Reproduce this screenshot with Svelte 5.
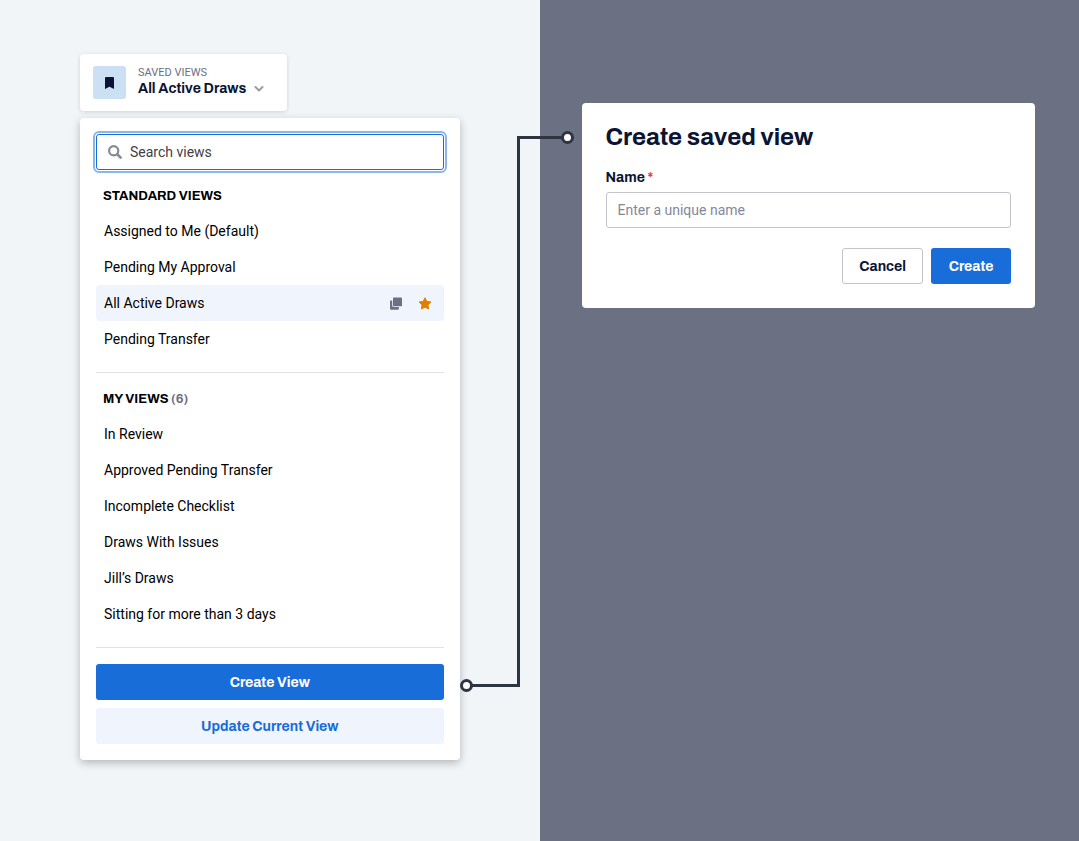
<script>
let search = $state("")
let selected = $state("All Active Draws")
let favorite = $state(true)
let name = $state("")

const standardViews = [
    "Assigned to Me (Default)",
    "Pending My Approval",
    "All Active Draws",
    "Pending Transfer"
]
let myViews = $state([
    "In Review",
    "Approved Pending Transfer",
    "Incomplete Checklist",
    "Draws With Issues",
    "Jill’s Draws",
    "Sitting for more than 3 days"
])

const matches = (view)=> view.toLowerCase().includes(search.toLowerCase())

const createView = (e)=>{
    e.preventDefault()
    if (name.trim() != ""){
        myViews.push(name.trim())
        name = ""
    }
}
</script>

{#snippet row(view)}
    <li class="row" class:selected={view == selected}>
        <button class="view" onclick={()=> selected = view}>{view}</button>
        {#if view == selected}
        <button class="icon" aria-label="Duplicate view">
            <svg width="12" height="13" viewBox="0 0 12 13">
                <path fill="#6b7082" d="M0 4.2a.8.8 0 0 1 .8-.8h1.4v5.2c0 .9.6 1.4 1.4 1.4h5.2v1.9a.8.8 0 0 1-.8.8H.8a.8.8 0 0 1-.8-.8z"/>
                <rect fill="#6b7082" x="3" y="0.4" width="9" height="8.8" rx="0.8"/>
            </svg>
        </button>
        <button class="icon" aria-label="Favorite" aria-pressed={favorite} onclick={()=> favorite = !favorite}>
            <svg width="14" height="13" viewBox="0 0 14 13">
                <path fill={favorite ? "#e37d00" : "#b4b7c3"} stroke={favorite ? "#e37d00" : "#b4b7c3"} stroke-width="1" stroke-linejoin="round" d="M7 .8 8.8 4.4 12.9 5 9.9 7.9 10.6 12 7 10.1 3.4 12 4.1 7.9 1.1 5 5.2 4.4z"/>
            </svg>
        </button>
        {/if}
    </li>
{/snippet}

<main>
    <section class="left">
        <button class="trigger">
            <span class="badge">
                <svg width="9" height="12" viewBox="0 0 9 12">
                    <path fill="#0b1533" d="M0 1a1 1 0 0 1 1-1h7a1 1 0 0 1 1 1v11L4.500 9.700 0 12z"/>
                </svg>
            </span>
            <span class="current">
                <span class="caption">SAVED VIEWS</span>
                <span class="name">{selected}</span>
            </span>
            <svg class="chevron" width="10" height="8" viewBox="0 0 10 8">
                <path fill="none" stroke="#9a9cab" stroke-width="2" stroke-linecap="round" stroke-linejoin="round" d="M1.500 2 5 5.500 8.500 2"/>
            </svg>
        </button>

        <div class="dropdown">
            <label class="search">
                <svg width="14" height="14" viewBox="0 0 14 14">
                    <circle cx="5.700" cy="5.700" r="4.600" fill="none" stroke="#85889a" stroke-width="2.200"/>
                    <path stroke="#85889a" stroke-width="2.600" stroke-linecap="round" d="M9.500 9.500 12.600 12.600"/>
                </svg>
                <input type="text" placeholder="Search views" aria-label="Search views" bind:value={search}>
            </label>

            <h2>STANDARD VIEWS</h2>
            <ul>
                {#each standardViews.filter(matches) as view}
                {@render row(view)}
                {/each}
            </ul>
            <hr>
            <h2>MY VIEWS <span>({myViews.length})</span></h2>
            <ul>
                {#each myViews.filter(matches) as view}
                {@render row(view)}
                {/each}
            </ul>
            <hr>
            <div class="actions">
                <button class="btn primary">Create View</button>
                <button class="btn light">Update Current View</button>
            </div>

            <!-- runs from the Create View button over to the dialog -->
            <svg class="connector" width="114" height="562" viewBox="0 0 114 562">
                <g fill="none" stroke="#2e3442" stroke-width="3">
                    <path d="M12 554.500H58.500V6.500H102"/>
                    <circle cx="6.500" cy="554.500" r="5" fill="#fff"/>
                    <circle cx="107.500" cy="6.500" r="5" fill="#fff"/>
                </g>
            </svg>
        </div>
    </section>

    <section class="right">
        <form class="dialog" onsubmit={createView}>
            <h1>Create saved view</h1>
            <label for="view-name">Name <span>*</span></label>
            <input id="view-name" type="text" placeholder="Enter a unique name" bind:value={name}>
            <div class="buttons">
                <button type="button" class="btn outline" onclick={()=> name = ""}>Cancel</button>
                <button type="submit" class="btn primary">Create</button>
            </div>
        </form>
    </section>
</main>

<style>
    :global(body){
        margin: 0;
    }
    main{
        display: grid;
        grid-template-columns: 1fr 1fr;
        min-height: 100vh;
        font-family: Roboto, sans-serif;
        font-size: 14px;
        line-height: 20px;
        color: #000;
    }
    button, input{
        font: inherit;
        color: inherit;
        box-sizing: border-box;
    }
    button{
        border: 0;
        padding: 0;
        background: none;
        cursor: pointer;
    }
    svg{
        display: block;
        flex: none;
    }
    .left{
        display: flex;
        flex-direction: column;
        align-items: flex-start;
        gap: 7px;
        padding: 54px 80px;
        background-color: #f1f5f8;
    }
    .right{
        padding: 103px 44px 103px 42px;
        background-color: #6b7082;
    }

    .trigger{
        display: flex;
        align-items: center;
        padding: 11px 23px 11px 13px;
        background-color: white;
        border-radius: 4px;
        box-shadow: 0 1px 4px rgba(0, 0, 0, 0.14);
        text-align: left;
    }
    .badge{
        display: flex;
        align-items: center;
        justify-content: center;
        width: 33px;
        height: 33px;
        margin-right: 12px;
        background-color: #cbe0f2;
        border-radius: 3px;
    }
    .current{
        display: flex;
        flex-direction: column;
        padding-bottom: 3px;
        line-height: 16px;
    }
    .caption{
        font-size: 11px;
        color: #6b7082;
    }
    .name{
        font-family: Archivo, "Liberation Sans", sans-serif;
        font-weight: bold;
        color: #0b1533;
    }
    .chevron{
        align-self: flex-end;
        margin: 0 0 7px 8px;
    }

    .dropdown{
        position: relative;
        align-self: stretch;
        padding: 16px;
        background-color: white;
        border-radius: 4px;
        box-shadow: 0 3px 8px rgba(0, 0, 0, 0.25);
    }
    .search{
        display: flex;
        align-items: center;
        gap: 8px;
        height: 36px;
        margin-bottom: 7px;
        padding: 0 11px;
        box-sizing: border-box;
        border: 1px solid #186dd9;
        border-radius: 3px;
        outline: 2px solid #8bb6ec;
        outline-offset: 1px;
    }
    .search input{
        flex: 1;
        min-width: 0;
        border: 0;
        padding: 0;
        outline: none;
        background: none;
    }
    .search input::placeholder{
        color: #3f4146;
    }
    h2{
        margin: 0;
        padding: 2px 7px 0;
        font-family: Archivo, "Liberation Sans", sans-serif;
        font-size: 13px;
        font-weight: bold;
        line-height: 34px;
    }
    h2 span{
        color: #6b7082;
    }
    ul{
        margin: 0;
        padding: 0;
        list-style: none;
    }
    .row{
        display: flex;
        align-items: center;
        gap: 16px;
        height: 36px;
        padding-right: 12px;
        border-radius: 4px;
    }
    .selected{
        background-color: #f0f5fd;
    }
    .view{
        flex: 1;
        height: 36px;
        padding: 0 8px;
        text-align: left;
    }
    hr{
        height: 1px;
        margin: 15px 0 7px;
        border: 0;
        background-color: #e1e2e5;
    }
    .actions{
        display: flex;
        flex-direction: column;
        gap: 8px;
        padding-top: 9px;
    }
    .btn{
        min-width: 80px;
        height: 36px;
        padding: 2px 16px 0;
        border-radius: 3px;
        font-family: Archivo, "Liberation Sans", sans-serif;
        font-weight: bold;
    }
    .primary{
        background-color: #186dd9;
        color: white;
    }
    .light{
        background-color: #f0f5fd;
        color: #186dd9;
    }
    .outline{
        border: 1px solid #c3c4ce;
        background-color: white;
        color: #0b1533;
    }
    .connector{
        position: absolute;
        left: 100%;
        bottom: 67px;
    }

    .dialog{
        display: flex;
        flex-direction: column;
        padding: 18px 24px 24px;
        background-color: white;
        border-radius: 4px;
        color: #0b1533;
    }
    h1{
        margin: 0 0 15px;
        font-family: Archivo, "Liberation Sans", sans-serif;
        font-size: 24px;
        font-weight: bold;
        line-height: 32px;
    }
    .dialog label{
        margin-bottom: 4px;
        font-family: Archivo, "Liberation Sans", sans-serif;
        font-weight: bold;
    }
    .dialog label span{
        color: #dd3b2c;
    }
    .dialog input{
        height: 36px;
        padding: 0 11px;
        border: 1px solid #c3c4ce;
        border-radius: 3px;
    }
    .dialog input::placeholder{
        color: #85889a;
    }
    .buttons{
        display: flex;
        justify-content: flex-end;
        gap: 8px;
        margin-top: 20px;
    }
</style>
